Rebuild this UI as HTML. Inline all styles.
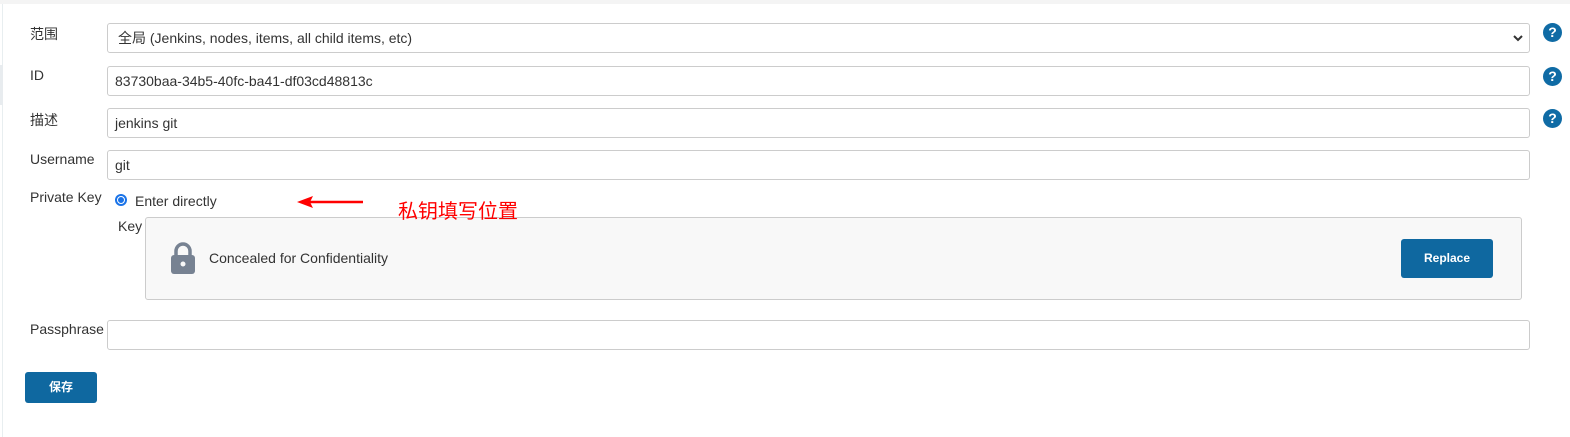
<!DOCTYPE html>
<html><head><meta charset="utf-8"><style>
body{margin:0;width:1570px;height:437px;background:#fff;font-family:"Liberation Sans","Noto Sans CJK SC",sans-serif;color:#333;font-size:14px;position:relative;overflow:hidden}
.a{position:absolute}
.inp{position:absolute;left:107px;border:1px solid #ccc;border-radius:3px;line-height:28px;padding-left:7px;box-sizing:border-box;width:1423px;height:30px}
.lbl{position:absolute;left:30px}
.help{position:absolute;left:1543px;width:19px;height:19px;border-radius:50%;background:#0f6ba5;color:#fff;font-weight:bold;font-size:14px;text-align:center;line-height:19px}
.btn{position:absolute;background:#0f68a0;color:#fff;font-weight:bold;font-size:12px;text-align:center;border-radius:3px}
</style></head><body>
<div class="a" style="left:0;top:0;width:1570px;height:4px;background:#f4f4f4"></div>
<div class="a" style="left:2px;top:4px;width:1px;height:433px;background:#e8eef0"></div>
<div class="a" style="left:0;top:65px;width:3px;height:40px;background:#e8ecef"></div>

<div class="lbl" style="top:24px">范围</div>
<div class="inp" style="top:23px;padding-left:10px">全局 (Jenkins, nodes, items, all child items, etc)
<svg class="a" style="right:6px;top:11px" width="10" height="7" viewBox="0 0 10 7"><path d="M1 1l4 4 4-4" stroke="#333" stroke-width="2" fill="none"/></svg></div>
<div class="help" style="top:23px">?</div>

<div class="lbl" style="top:67px">ID</div>
<div class="inp" style="top:66px">83730baa-34b5-40fc-ba41-df03cd48813c</div>
<div class="help" style="top:67px">?</div>

<div class="lbl" style="top:110px">描述</div>
<div class="inp" style="top:108px">jenkins git</div>
<div class="help" style="top:109px">?</div>

<div class="lbl" style="top:151px">Username</div>
<div class="inp" style="top:150px">git</div>

<div class="lbl" style="top:189px">Private Key</div>
<div class="a" style="left:115px;top:194px;width:12px;height:12px;background:#1a73e8;border-radius:50%"></div>
<div class="a" style="left:117px;top:196px;width:8px;height:8px;border:1px solid #fff;border-radius:50%;box-sizing:border-box"></div>
<div class="a" style="left:135px;top:193px">Enter directly</div>
<svg class="a" style="left:296px;top:195px" width="70" height="14"><path d="M14 7H67" stroke="#f00" stroke-width="2.5"/><path d="M1 7L17 1L14 7L17 13Z" fill="#f00"/></svg>

<div class="a" style="left:118px;top:218px">Key</div>
<div class="a" style="left:145px;top:217px;width:1377px;height:83px;border:1px solid #ccc;border-radius:3px;background:#f8f8f8;box-sizing:border-box"></div>
<div class="a" style="left:398px;top:195px;font-size:20px;color:#f00;z-index:2">私钥填写位置</div>
<svg class="a" style="left:170px;top:242px" width="26" height="33" viewBox="0 0 26 33"><path d="M6 14V9a7 7 0 0 1 14 0v5" stroke="#778292" stroke-width="3.5" fill="none"/><rect x="1" y="13" width="24" height="19" rx="3" fill="#778292"/><circle cx="13" cy="22" r="2.5" fill="#f8f8f8"/></svg>
<div class="a" style="left:209px;top:250px">Concealed for Confidentiality</div>
<div class="btn" style="left:1401px;top:239px;width:92px;height:39px;line-height:39px">Replace</div>

<div class="lbl" style="top:321px">Passphrase</div>
<div class="inp" style="top:320px"></div>

<div class="btn" style="left:25px;top:372px;width:72px;height:31px;line-height:31px">保存</div>
</body></html>
